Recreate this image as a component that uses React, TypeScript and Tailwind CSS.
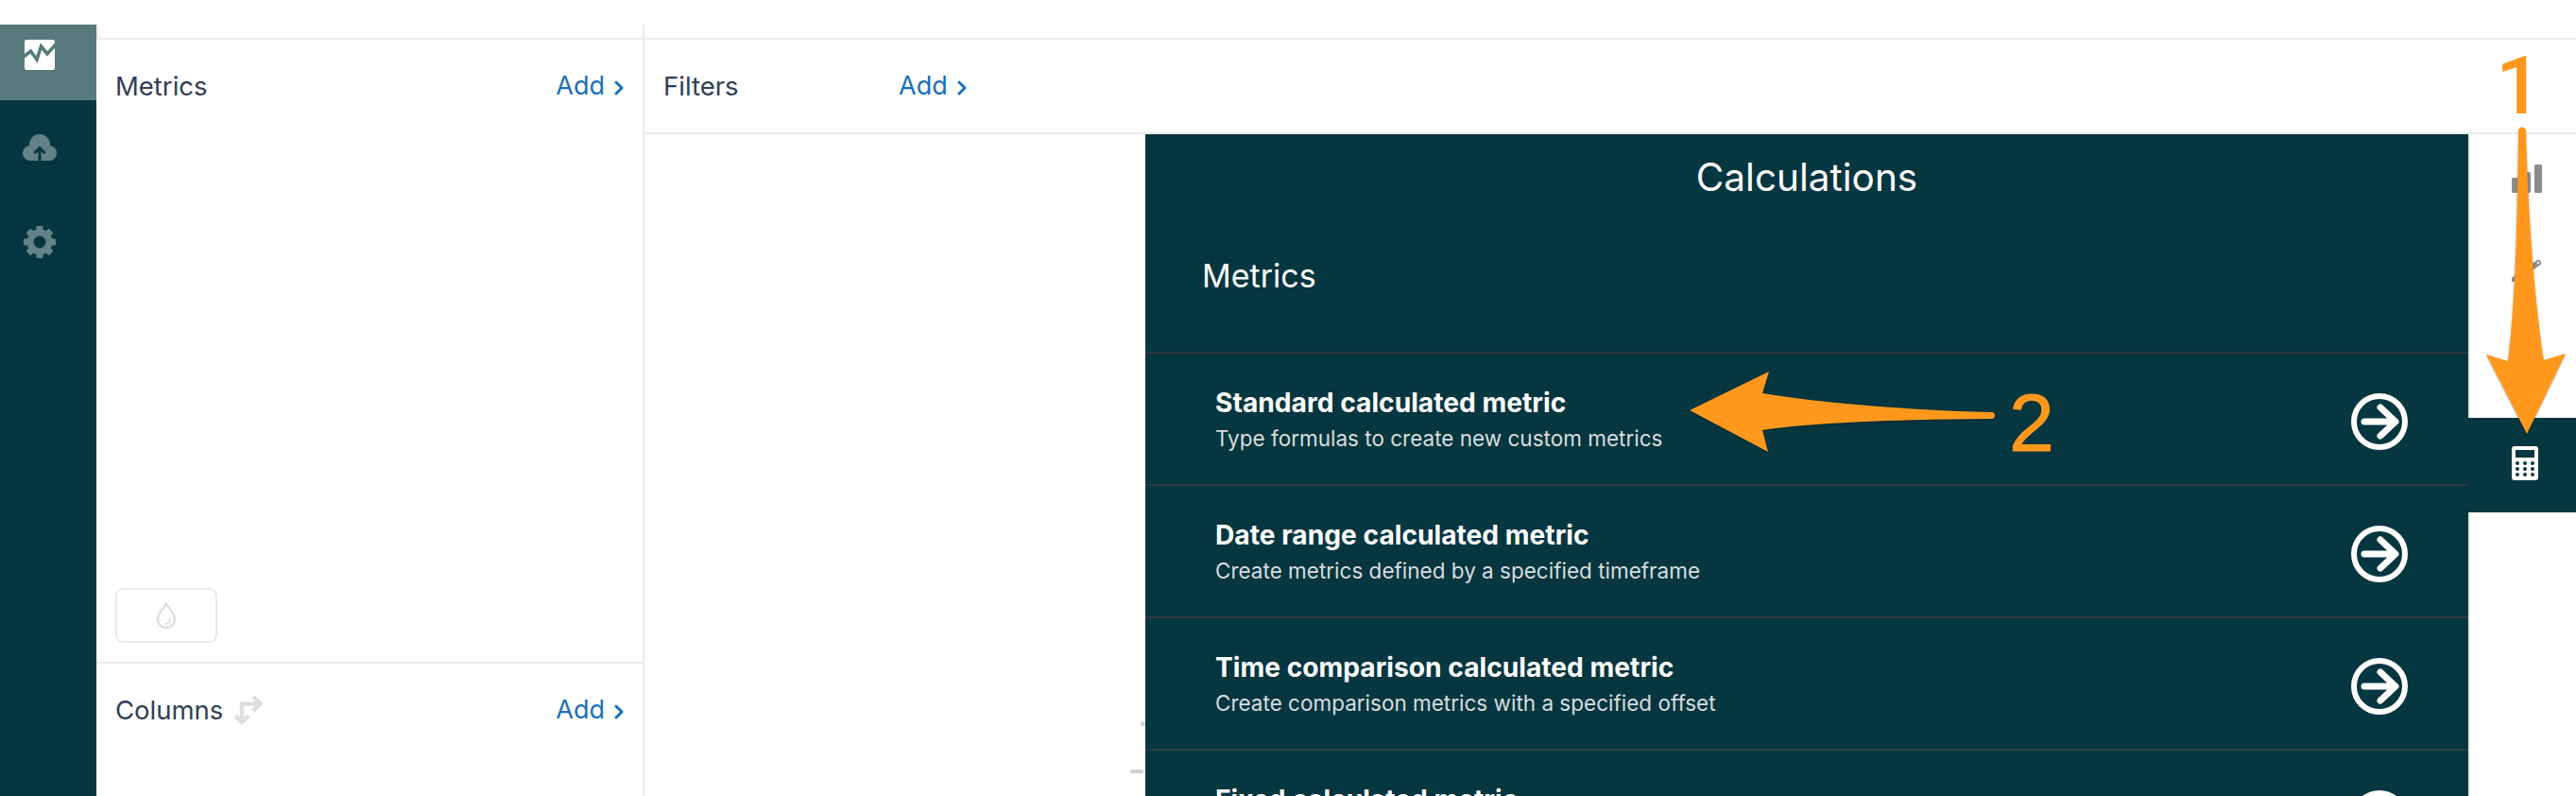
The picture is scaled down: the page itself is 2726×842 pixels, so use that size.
import React from "react";

const rows = [
  ["Standard calculated metric", "Type formulas to create new custom metrics"],
  ["Date range calculated metric", "Create metrics defined by a specified timeframe"],
  ["Time comparison calculated metric", "Create comparison metrics with a specified offset"],
  ["Fixed calculated metric", "Create metrics with a fixed value"],
];

function Chevron() {
  return (
    <svg width="10" height="16" viewBox="0 0 10 16" className="ml-[10px] mt-[3px]" fill="none">
      <path d="M2 2l6 6-6 6" stroke="#1a6fb8" strokeWidth="3" strokeLinecap="round" strokeLinejoin="round" />
    </svg>
  );
}

function Add() {
  return (
    <span className="flex items-center text-[27px] leading-[36px] text-[#1a6fb8]">
      Add
      <Chevron />
    </span>
  );
}

function Gear() {
  return (
    <svg width="34" height="34" viewBox="0 0 34 34">
      <circle cx="17" cy="17" r="10" fill="none" stroke="#628288" strokeWidth="7" />
      {[0, 45, 90, 135, 180, 225, 270, 315].map((a) => (
        <rect key={a} x="13.5" y="0" width="7" height="6" rx="1" fill="#628288" transform={`rotate(${a} 17 17)`} />
      ))}
    </svg>
  );
}

function ArrowCircle() {
  return (
    <svg width="60" height="60" viewBox="0 0 60 60" fill="none" className="mt-[6px] shrink-0">
      <circle cx="30" cy="30" r="27" stroke="#fff" strokeWidth="6" />
      <path d="M14 30H46M31 15l16 15-16 15" stroke="#fff" strokeWidth="7" strokeLinecap="round" strokeLinejoin="round" />
    </svg>
  );
}

export default function App() {
  return (
    <div className="relative flex h-[842px] w-[2726px] flex-col overflow-hidden bg-white font-['Inter',sans-serif]">
      <div className="h-[26px] shrink-0" />
      <div className="flex min-h-0 flex-1">
        {/* Sidebar */}
        <aside className="flex w-[102px] shrink-0 flex-col bg-[#06363f]">
          <div className="flex h-[80px] justify-center bg-[#587a7c] pt-[16px] pr-[18px]">
            <svg width="32" height="32" viewBox="0 0 32 32">
              <rect width="32" height="32" rx="2" fill="#fff" />
              <path d="M-1 18l7.5-6 6.5 9 4.500-14 6.500 8 9-10" fill="none" stroke="#587a7c" strokeWidth="3.6" />
            </svg>
          </div>
          <div className="flex h-[100px] justify-center pt-[36px] pr-[18px]">
            <svg width="36" height="28" viewBox="0 0 36 28">
              <circle cx="8" cy="20" r="8" fill="#628288" />
              <circle cx="28" cy="20" r="8" fill="#628288" />
              <circle cx="18" cy="11" r="11" fill="#628288" />
              <rect x="8" y="14" width="20" height="14" fill="#628288" />
              <path d="M18 28V15M12.5 20l5.5-5.5 5.5 5.5" fill="none" stroke="#06363f" strokeWidth="3" />
            </svg>
          </div>
          <div className="flex justify-center pt-[33px] pr-[18px]">
            <Gear />
          </div>
        </aside>

        {/* Left column */}
        <section className="flex w-[580px] shrink-0 flex-col border-r-2 border-[#ebebeb]">
          <div className="h-[16px] shrink-0 border-b-2 border-l-2 border-[#ebebeb]" />
          <div className="flex h-[660px] shrink-0 flex-col border-b-2 border-[#ebebeb] px-5">
            <div className="flex h-[98px] shrink-0 items-center justify-between">
              <span className="text-[27.5px] leading-[36px] text-[#2f3e55]">Metrics</span>
              <Add />
            </div>
            <div className="mt-[482px] flex h-[58px] w-[108px] items-center justify-center rounded-lg border-2 border-[#ebebeb]">
              <svg width="22" height="28" viewBox="0 0 22 28" fill="none">
                <path d="M11 2C8 7 2 12 2 18a9 9 0 0 0 18 0C20 12 14 7 11 2Z" stroke="#dcdfe2" strokeWidth="2.4" />
                <path d="M9 23c4 0 6-2.500 6-6" stroke="#dcdfe2" strokeWidth="2" />
              </svg>
            </div>
          </div>
          <div className="flex h-[98px] shrink-0 items-center justify-between px-5">
            <span className="flex items-center text-[27.5px] leading-[36px] text-[#2f3e55]">
              Columns
              <svg width="31" height="32" viewBox="0 0 31 32" fill="none" className="ml-[12px]">
                <path d="M8 27V9.500H27M20 2l7.500 7.500L20 17M1 22l7 7 7-7" stroke="#dcdfe2" strokeWidth="4.500" />
              </svg>
            </span>
            <Add />
          </div>
        </section>

        {/* Main */}
        <main className="flex min-w-0 flex-1 flex-col">
          <div className="h-[16px] shrink-0 border-b-2 border-[#ebebeb]" />
          <div className="flex h-[100px] shrink-0 items-center border-b-2 border-[#ebebeb] pl-[20px]">
            <span className="w-[249px] text-[27.5px] leading-[36px] text-[#2f3e55]">Filters</span>
            <Add />
          </div>
          <div className="flex min-h-0 flex-1">
            <div className="relative w-[530px] shrink-0">
              <span className="absolute left-[525px] top-[621px] h-[5px] w-[5px] rounded-full bg-[#cfcfcf]" />
              <span className="absolute left-[514px] top-[672px] h-[4px] w-[14px] rounded-full bg-[#cfcfcf]" />
            </div>

            {/* Calculations panel */}
            <div className="w-[1400px] shrink-0 bg-[#06363f] text-white">
              <div className="flex h-[92px] items-center justify-center text-[40.500px] leading-[48px]">Calculations</div>
              <div className="mb-[22px] flex h-[116px] items-center pl-[60px] text-[34px] leading-[44px]">Metrics</div>
              {rows.map(([title, desc]) => (
                <div key={title} className="flex h-[140px] items-center justify-between border-t-2 border-[#2f3a41] pl-[74px] pr-[64px]">
                  <div className="self-start pt-[34px]">
                    <div className="text-[28.200px] font-bold leading-[36px]">{title}</div>
                    <div className="mt-[2px] text-[22.500px] leading-[36px] text-[#d8dddf]">{desc}</div>
                  </div>
                  <ArrowCircle />
                </div>
              ))}
            </div>

            {/* Right rail */}
            <div className="flex min-w-0 flex-1 flex-col border-l-2 border-[#ebebeb]">
              <div className="flex h-[100px] shrink-0 justify-center pt-[32px] pl-[8px]">
                <svg width="32" height="30" viewBox="0 0 32 30" fill="#8c8c8c">
                  <rect x="0" y="14" width="8" height="16" rx="1.500" />
                  <rect x="12" y="8" width="8" height="22" rx="1.500" />
                  <rect x="24" y="0" width="8" height="30" rx="1.500" />
                </svg>
              </div>
              <div className="flex h-[100px] shrink-0 justify-center pt-[32px] pl-[8px]">
                <svg width="32" height="24" viewBox="0 0 32 24" fill="none">
                  <path d="M2 22L28 4" stroke="#8c8c8c" strokeWidth="6" strokeLinecap="round" />
                  <circle cx="28" cy="4" r="1.200" fill="#fff" />
                </svg>
              </div>
              <div className="h-[100px] shrink-0" />
              <div className="-ml-[2px] flex h-[100px] shrink-0 justify-center bg-[#06363f] pt-[30px] pl-[6px]">
                <svg width="28" height="36" viewBox="0 0 28 36">
                  <rect width="28" height="36" rx="3" fill="#fff" />
                  <rect x="4" y="4" width="20" height="8" fill="#06363f" />
                  {[18, 24, 30].map((y) =>
                    [6, 14, 22].map((x) => <circle key={`${x}-${y}`} cx={x} cy={y} r="2" fill="#06363f" />)
                  )}
                </svg>
              </div>
            </div>
          </div>
        </main>
      </div>

      {/* Annotations laid over the screenshot */}
      <svg width="2726" height="842" viewBox="0 0 2726 842" className="pointer-events-none absolute left-0 top-0 drop-shadow-[0_1px_1px_rgba(0,0,0,0.3)]">
        <path
          d="M2665 139C2665 133 2673 133 2673 139C2675 220 2682 320 2692 381L2715 374L2674 459L2631 375L2654 382C2662 320 2664 220 2665 139Z"
          fill="#ff981d"
        />
        <path
          d="M2108 436C2112 436 2112 443 2108 443C2000 444 1920 447 1865 455L1871 478L1788 434L1872 393L1865 416C1920 425 2000 433 2108 436Z"
          fill="#ff981d"
        />
      </svg>
      <span className="absolute left-[2641px] top-[48px] font-['Roboto',sans-serif] text-[86px] font-medium leading-none text-[#ff981d]">1</span>
      <span className="absolute left-[2126px] top-[404px] font-['Liberation_Sans',sans-serif] text-[86px] leading-none text-[#ff981d] [-webkit-text-stroke:1px_#ff981d]">2</span>
    </div>
  );
}
